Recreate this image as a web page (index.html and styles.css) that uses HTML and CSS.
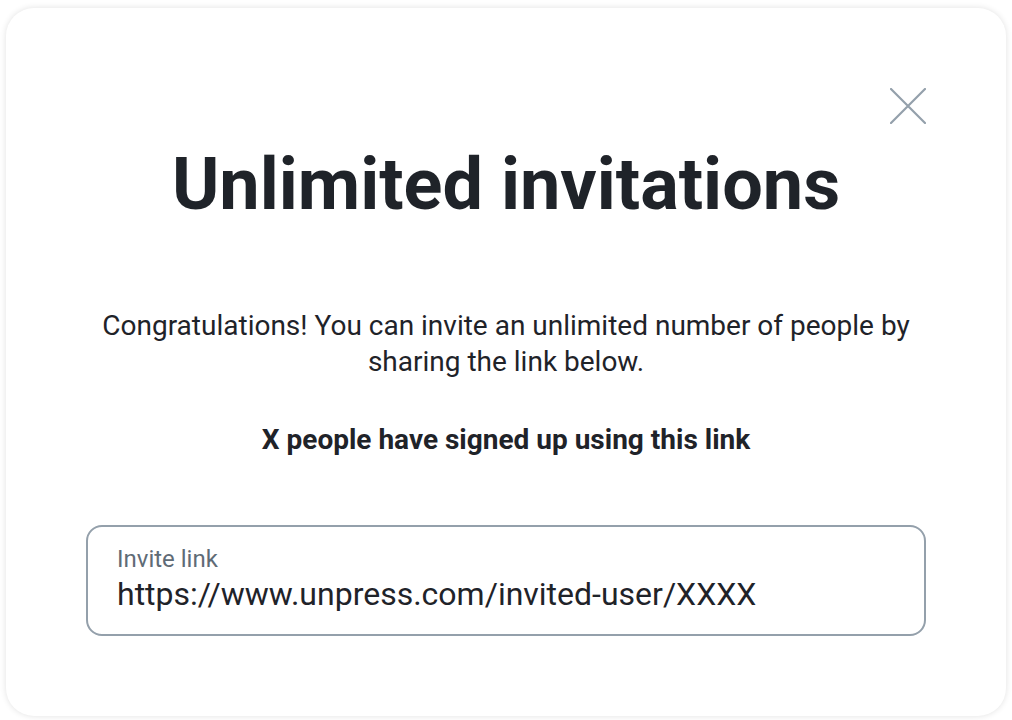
FILE: index.html
```html
<!DOCTYPE html>
<html lang="en">
<head>
    <meta charset="UTF-8">
    <meta name="viewport" content="width=device-width, initial-scale=1.0">
    <title>Unlimited invitations</title>
    <link rel="stylesheet" href="styles.css">
</head>
<body>

    <!-- Invite dialog -->
    <div class="dialog">
        <div class="dialog-header">
            <button class="close-btn" aria-label="Close">
                <svg width="36" height="36" viewBox="0 0 36 36">
                    <path d="M1 1 L35 35 M35 1 L1 35" stroke="#94a0ab" stroke-width="2.2" stroke-linecap="round" fill="none"/>
                </svg>
            </button>
        </div>

        <h1 class="title">Unlimited invitations</h1>

        <p class="intro">Congratulations! You can invite an unlimited number of people by sharing the link below.</p>

        <p class="signups">X people have signed up using this link</p>

        <div class="link-field">
            <label for="inviteLink">Invite link</label>
            <input type="text" id="inviteLink" value="https://www.unpress.com/invited-user/XXXX" readonly>
        </div>
    </div>

</body>
</html>
```

FILE: styles.css
```css
body {
    margin: 0;
    padding: 8px 6px 4px;
    font-family: Roboto, "Liberation Sans", sans-serif;
    background-color: #fff;
    color: #1f2329;
}

.dialog {
    width: 1000px;
    height: 708px;
    box-sizing: border-box;
    padding: 80px;
    background-color: #fff;
    border-radius: 28px;
    box-shadow: 0 0 6px rgba(0, 0, 0, 0.12);
    text-align: center;
}

.dialog-header {
    display: flex;
    justify-content: flex-end;
}

.close-btn {
    padding: 0;
    border: none;
    background: none;
    width: 36px;
    height: 36px;
    cursor: pointer;
}

.close-btn svg {
    display: block;
}

.title {
    margin: 18px 0 0;
    font-size: 72px;
    line-height: 86px;
    font-weight: 700;
}

.intro {
    margin: 80px 0 0;
    font-size: 28px;
    line-height: 36px;
}

.signups {
    margin: 42px 0 0;
    font-size: 28px;
    line-height: 36px;
    font-weight: 700;
}

.link-field {
    margin-top: 67px;
    height: 111px;
    box-sizing: border-box;
    padding: 18px 29px 0;
    border: 2px solid #94a0ab;
    border-radius: 16px;
    text-align: left;
}

.link-field label {
    display: block;
    font-size: 24px;
    line-height: 28px;
    color: #5f6b76;
}

.link-field input {
    display: block;
    width: 100%;
    margin-top: 1px;
    padding: 0;
    border: none;
    outline: none;
    font-family: inherit;
    font-size: 32px;
    line-height: 40px;
    color: #1f2329;
}
```
